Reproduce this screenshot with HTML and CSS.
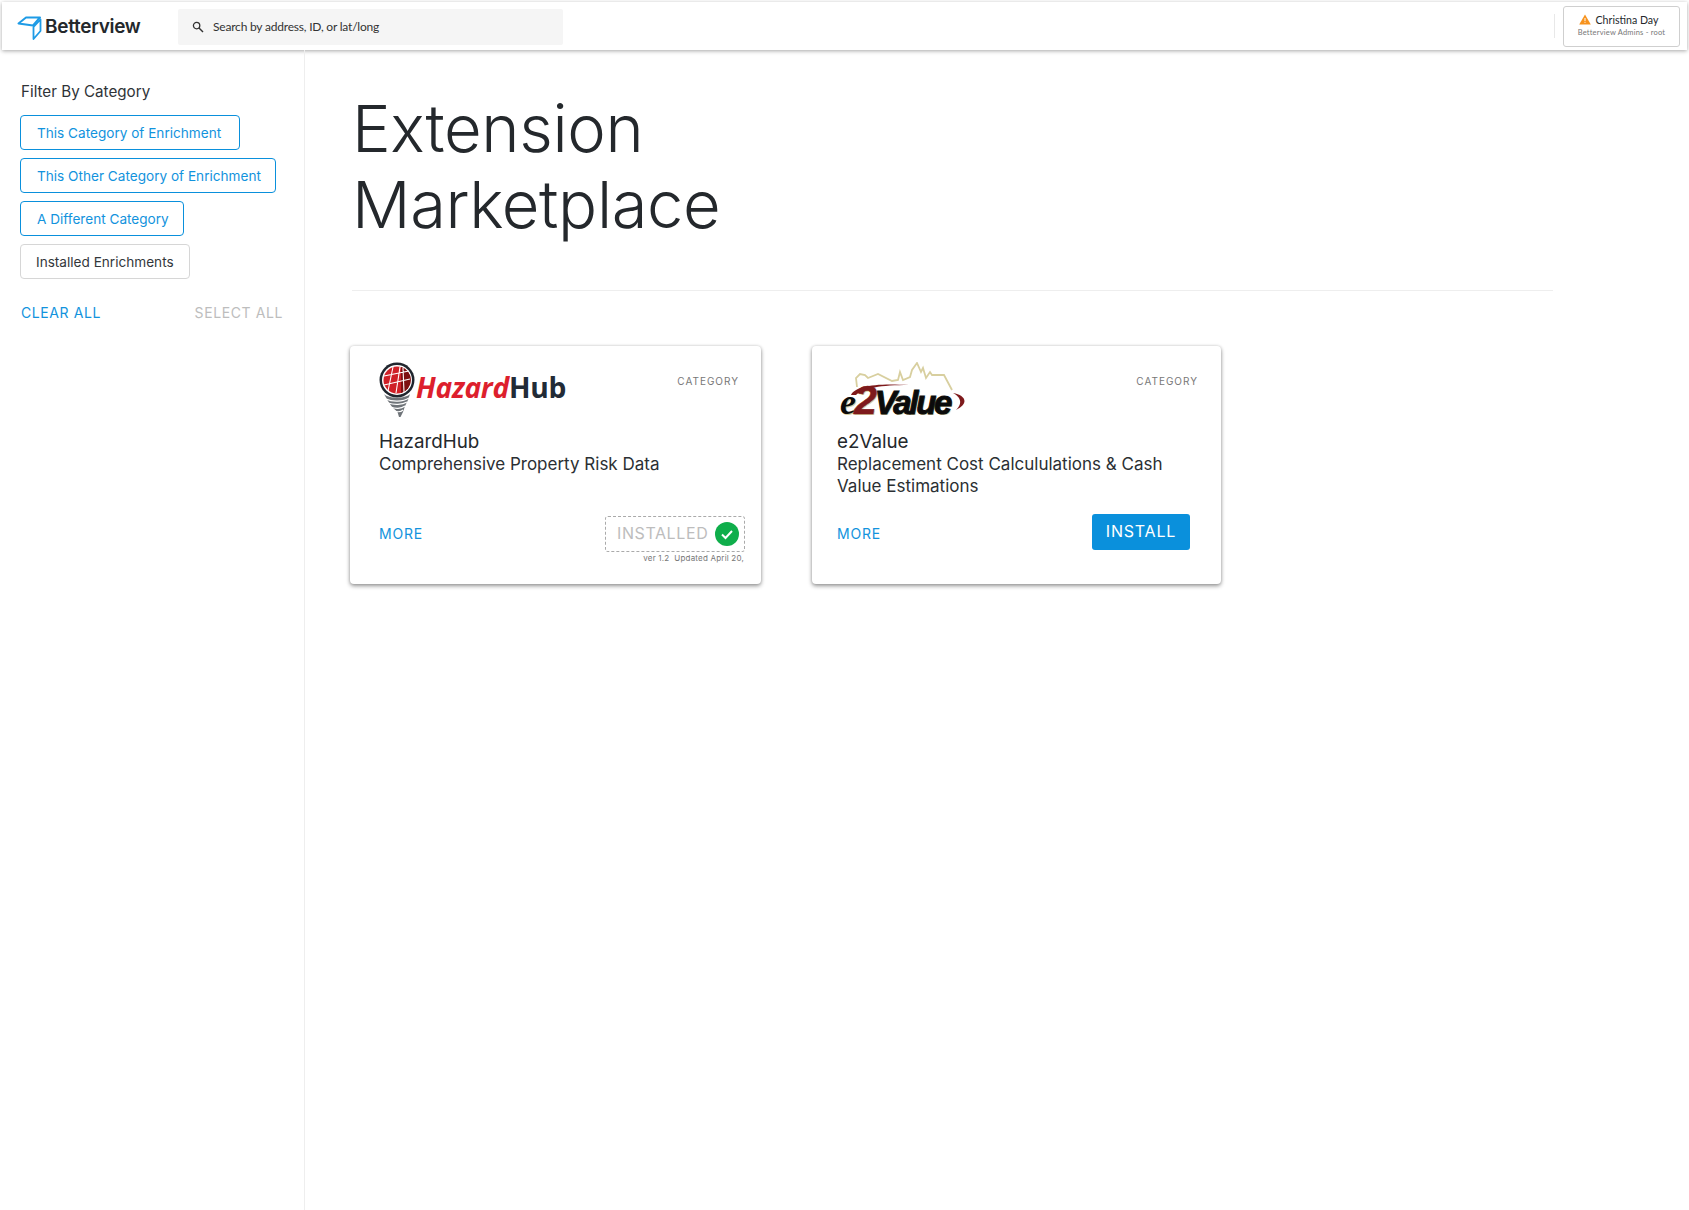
FILE: index.html
```html
<!DOCTYPE html>
<html>
<head lang="en">
    <meta charset="UTF-8">
    <title>Extension Marketplace</title>
    <link rel="stylesheet" href="styles.css">
</head>
<body>
<div class="header">
    <div class="brand">
        <svg class="brand-icon" width="26" height="24" viewBox="0 0 26 24">
            <path d="M1.5 7.5 L9 1.5 H23 L16 9.5 Z" fill="none" stroke="#1e9be6" stroke-width="2" stroke-linejoin="round"/>
            <path d="M16.5 11 L23.5 3.5 V15 L16.5 23 Z" fill="none" stroke="#1e9be6" stroke-width="1.8" stroke-linejoin="round"/>
        </svg>
        <span class="brand-name">Betterview</span>
    </div>
    <div class="search">
        <svg class="search-icon" width="12" height="12" viewBox="0 0 12 12">
            <circle cx="4.6" cy="4.6" r="3.2" fill="none" stroke="#333" stroke-width="1.3"/>
            <path d="M7 7 L11 11" stroke="#333" stroke-width="1.5"/>
        </svg>
        <span>Search by address, ID, or lat/long</span>
    </div>
    <div class="header-sep"></div>
    <div class="user">
        <div class="user-name">
            <svg width="12" height="11" viewBox="0 0 12 11">
                <path d="M6 0.5 L11.8 10.5 H0.2 Z" fill="#f7931e"/>
                <rect x="5.5" y="4" width="1" height="3" fill="#fff"/>
                <rect x="5.5" y="7.8" width="1" height="1" fill="#fff"/>
            </svg>
            <span>Christina Day</span>
        </div>
        <div class="user-org">Betterview Admins - root</div>
    </div>
</div>

<div class="page">
    <div class="sidebar">
        <div class="filter-title">Filter By Category</div>
        <div class="chip chip-on chip-a">This Category of Enrichment</div>
        <div class="chip chip-on">This Other Category of Enrichment</div>
        <div class="chip chip-on">A Different Category</div>
        <div class="chip chip-off">Installed Enrichments</div>
        <div class="filter-links">
            <span class="link">CLEAR ALL</span>
            <span class="link-off">SELECT ALL</span>
        </div>
    </div>

    <div class="content">
        <h1 class="title">Extension<br>Marketplace</h1>
        <div class="rule"></div>
        <div class="cards">
            <div class="card">
                <div class="card-top">
                    <div class="logo-hazard">
                        <svg width="36" height="56" viewBox="0 0 36 56">
                            <path d="M5 32 C10 37 26 37 31 32 L29 38 L26 44 L24 50 L21.5 55 L20 55 L18.5 50 L13 45 L9 39 Z" fill="#6f7479"/>
                            <path d="M7 37 C13 40 24 40 30 36 M9 41 C15 43 23 43 28 40 M12 45 C16 47 22 47 26 44 M15 49 C18 50 22 50 24 48" stroke="#fff" stroke-width="1.1" fill="none"/>
                            <circle cx="18" cy="18" r="17.5" fill="#20262e"/>
                            <circle cx="18" cy="18" r="15" fill="#fff"/>
                            <circle cx="18" cy="18" r="13.5" fill="#cf2027"/>
                            <path d="M22 5 A13.5 13.5 0 0 1 22 31 Z" fill="#7d1010"/>
                            <path d="M5 14 L30 9 M5 23 L31 17 M9 29 L14 5 M17 31 L21 5 M24 6 L25 30" stroke="#fff" stroke-width="1.1" fill="none"/>
                        </svg>
                        <span class="hazard-text"><span class="hazard-red">Hazard</span><span class="hazard-dark">Hub</span></span>
                    </div>
                    <div class="category">CATEGORY</div>
                </div>
                <div class="card-name">HazardHub</div>
                <div class="card-desc">Comprehensive Property Risk Data</div>
                <div class="card-foot">
                    <span class="link more">MORE</span>
                    <div class="installed-wrap">
                        <div class="installed">
                            <span class="installed-label">INSTALLED</span>
                            <svg width="24" height="24" viewBox="0 0 24 24">
                                <circle cx="12" cy="12" r="12" fill="#0fae4b"/>
                                <path d="M7 12.5 L10.5 16 L17 9" fill="none" stroke="#fff" stroke-width="2"/>
                            </svg>
                        </div>
                        <div class="version">ver 1.2&nbsp; Updated April 20,</div>
                    </div>
                </div>
            </div>

            <div class="card card-two">
                <div class="card-top">
                    <div class="logo-value">
                        <svg class="skyline" width="132" height="56" viewBox="0 0 132 56">
                            <path d="M20 25 L19 16 L23 12 L28 13 L31 16 L41 12 L55 19 L61 18 L63 10 L66 18 L73 15 L75 8 L80 1 L84 10 L86 6 L89 16 L93 10 L95 13 L107 13 L115 28" fill="none" stroke="#d8cf9f" stroke-width="1.8"/>
                            <path d="M14 33 C18 24 38 21 72 23 C44 23 26 26 19 33 Z" fill="#7e1a1c"/>
                            <path d="M116 31 C128 33 133 41 119 48 C125 42 125 36 116 31 Z" fill="#7e1a1c"/>
                        </svg>
                        <div class="value-text"><span class="value-e">e</span><span class="value-two">2</span><span class="value-word">Value</span></div>
                    </div>
                    <div class="category">CATEGORY</div>
                </div>
                <div class="card-name">e2Value</div>
                <div class="card-desc">Replacement Cost Calcululations &amp; Cash Value Estimations</div>
                <div class="card-foot">
                    <span class="link more">MORE</span>
                    <div class="install-btn">INSTALL</div>
                </div>
            </div>
        </div>
    </div>
</div>
</body>
</html>
```

FILE: styles.css
```css
*{
    margin: 0;
    padding: 0;
    box-sizing: border-box;
}
html, body{
    height: 100%;
}
body{
    font-family: Inter, "Liberation Sans", sans-serif;
    color: #24282c;
    background: #ffffff;
    overflow: hidden;
}
.header{
    display: flex;
    align-items: center;
    height: 48px;
    margin: 2px 2px 0 2px;
    padding: 0 7px 0 15px;
    background: #ffffff;
    box-shadow: 0 1px 4px rgba(0,0,0,0.35);
}
.brand{
    display: flex;
    align-items: center;
    width: 161px;
}
.brand-icon{
    margin-top: 4px;
    flex: none;
}
.brand-name{
    margin-left: 2px;
    font-size: 19px;
    font-weight: 600;
    letter-spacing: -0.3px;
    color: #24282c;
}
.search{
    display: flex;
    align-items: center;
    width: 385px;
    height: 36px;
    padding-left: 14px;
    margin-top: 1px;
    background: #f5f5f5;
    border-radius: 2px;
    font-family: Lato, sans-serif;
    font-size: 12px;
    letter-spacing: -0.2px;
    color: #333;
}
.search-icon{
    margin-right: 9px;
}
.header-sep{
    width: 1px;
    height: 24px;
    margin-left: auto;
    margin-right: 8px;
    background: #e8e8e8;
}
.user{
    width: 117px;
    height: 41px;
    padding-top: 6px;
    border: 1px solid #cfcfcf;
    border-radius: 3px;
    text-align: center;
}
.user-name{
    display: flex;
    align-items: center;
    justify-content: center;
    gap: 5px;
    padding-right: 6px;
    font-family: Lato, sans-serif;
    font-size: 10.6px;
    line-height: 14px;
}
.user-org{
    margin-top: 1px;
    font-family: Lato, sans-serif;
    font-size: 7.5px;
    line-height: 10px;
    letter-spacing: 0.2px;
    color: #777;
}
.page{
    display: flex;
    height: 1160px;
}
.sidebar{
    width: 305px;
    flex: none;
    padding: 32px 21px 0 20px;
    border-right: 1px solid #eeeeee;
}
.filter-title{
    margin: 0 0 13px 1px;
    font-size: 15.2px;
    line-height: 20px;
    color: #2f3337;
}
.chip{
    display: flex;
    align-items: center;
    height: 35px;
    margin-bottom: 8px;
    font-size: 13.6px;
    white-space: nowrap;
    border-radius: 4px;
    width: fit-content;
}
.chip-on{
    padding: 0 14px 0 16px;
    border: 1px solid #0a90dc;
    color: #1293dd;
}
.chip-a{
    padding-right: 18px;
}
.chip-off{
    padding: 0 15px 0 15px;
    border: 1px solid #d6d6d6;
    color: #33373b;
}
.filter-links{
    display: flex;
    justify-content: space-between;
    margin: 25px 0 0 1px;
    font-size: 14px;
    letter-spacing: 0.6px;
    line-height: 18px;
}
.link{
    color: #1293dd;
}
.link-off{
    color: #bdbdbd;
}
.content{
    flex: 1;
    padding: 41px 0 0 47px;
}
.title{
    font-size: 65px;
    font-weight: 350;
    line-height: 75.6px;
    letter-spacing: -0.35px;
    color: #24282c;
}
.rule{
    width: 1201px;
    height: 1px;
    margin-top: 48px;
    background: #eeeeee;
}
.cards{
    display: flex;
    gap: 51px;
    margin: 55px 0 0 -2px;
}
.card{
    display: flex;
    flex-direction: column;
    width: 411px;
    height: 238px;
    padding: 16px 16px 0 29px;
    background: #ffffff;
    border-radius: 4px;
    box-shadow: 0 2px 4px rgba(0,0,0,0.4), 0 0 3px rgba(0,0,0,0.15);
}
.card-two{
    width: 409px;
    padding: 16px 17px 0 25px;
}
.card-top{
    display: flex;
    justify-content: space-between;
    height: 62px;
}
.category{
    margin: 12px 6px 0 0;
    font-size: 10px;
    letter-spacing: 1px;
    line-height: 14px;
    color: #777;
}
.logo-hazard{
    display: flex;
    align-items: flex-start;
}
.hazard-text{
    margin: 8px 0 0 1px;
    font-family: "Open Sans", sans-serif;
    font-size: 28.2px;
    line-height: 34px;
    font-weight: 700;
    letter-spacing: -0.3px;
}
.hazard-red{
    color: #dd1f2d;
    font-style: italic;
}
.hazard-dark{
    color: #222b36;
}
.logo-value{
    position: relative;
    width: 132px;
    height: 56px;
}
.skyline{
    position: absolute;
    left: 0;
    top: 0;
}
.value-text{
    position: absolute;
    left: 3px;
    top: 16px;
    display: flex;
    align-items: baseline;
    font-family: "Liberation Sans", sans-serif;
    line-height: 44px;
    font-weight: 700;
    font-style: italic;
    color: #0b0b0b;
    text-shadow: 1px 1px 0 #d8cf9f;
}
.value-e{
    font-family: "Liberation Serif", serif;
    font-size: 36px;
}
.value-two{
    font-size: 41px;
    margin-left: -2px;
    color: #7e1a1c;
    -webkit-text-stroke: 0.6px #7e1a1c;
}
.value-word{
    font-size: 33px;
    margin-left: -2px;
    letter-spacing: -2.3px;
    -webkit-text-stroke: 1px #0b0b0b;
}
.card-name{
    margin-top: 7px;
    font-size: 18.8px;
    line-height: 22px;
    color: #24282c;
}
.card-desc{
    max-width: 345px;
    min-height: 44px;
    font-size: 17px;
    line-height: 22px;
    color: #2b2f33;
}
.card-foot{
    display: flex;
    justify-content: space-between;
    margin-top: 17px;
}
.more{
    margin-top: 11px;
    font-size: 14px;
    line-height: 18px;
    letter-spacing: 0.8px;
}
.installed{
    display: flex;
    align-items: center;
    justify-content: space-between;
    width: 140px;
    height: 36px;
    padding: 0 5px 0 11px;
    border: 1px dashed #aaaaaa;
    border-radius: 3px;
    font-size: 16px;
    letter-spacing: 0.6px;
    color: #bdbdbd;
}
.installed-label{
    padding-bottom: 2px;
}
.installed-wrap{
    margin-top: 2px;
}
.version{
    margin: 1px 1px 0 0;
    font-size: 8px;
    line-height: 10px;
    letter-spacing: 0.2px;
    text-align: right;
    white-space: nowrap;
    color: #777;
}
.install-btn{
    display: flex;
    align-items: center;
    justify-content: center;
    width: 98px;
    height: 36px;
    margin: 0 14px 0 0;
    padding-bottom: 2px;
    background: #0a90dc;
    border-radius: 3px;
    font-size: 16px;
    letter-spacing: 0.8px;
    color: #ffffff;
}
```
